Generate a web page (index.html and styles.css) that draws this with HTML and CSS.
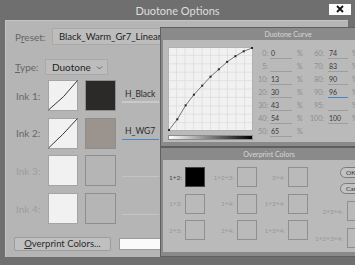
FILE: index.html
```html
<!DOCTYPE html>
<html>
<head>
  <meta charset="utf-8">
  <title>Duotone Options</title>
  <link rel="stylesheet" href="styles.css">
</head>
<body>
<div class="dialog">

  <div class="titlebar">
    <span class="title">Duotone Options</span>
    <div class="close">
      <svg width="8" height="8" viewBox="0 0 8 8"><path d="M1 1L7 7M7 1L1 7" stroke="#111" stroke-width="1.8"/></svg>
    </div>
  </div>

  <div class="panel">
    <div class="field-row">
      <span class="label preset-label">P<u>r</u>eset:</span>
      <div class="select preset-select">Black_Warm_Gr7_Linear</div>
    </div>
    <div class="field-row type-row">
      <span class="label type-label"><u>T</u>ype:</span>
      <div class="select type-select">
        <span>Duotone</span>
        <svg width="7" height="5" viewBox="0 0 7 5"><path d="M1 1.5L3.5 4L6 1.5" fill="none" stroke="#666" stroke-width="1"/></svg>
      </div>
    </div>

    <div class="inks">
      <div class="ink">
        <span class="ink-label">Ink 1:</span>
        <div class="curve-box">
          <svg width="30" height="31" viewBox="0 0 30 31"><path d="M0.5 30 Q 16 18 29.5 0.5" fill="none" stroke="#222" stroke-width="0.9"/></svg>
        </div>
        <div class="swatch swatch-black"></div>
        <div class="ink-name">H_Black</div>
      </div>
      <div class="ink">
        <span class="ink-label">Ink 2:</span>
        <div class="curve-box">
          <svg width="30" height="31" viewBox="0 0 30 31"><path d="M0.5 30 Q 14 18 29.5 0.5" fill="none" stroke="#222" stroke-width="0.9"/></svg>
        </div>
        <div class="swatch swatch-warm"></div>
        <div class="ink-name active">H_WG7</div>
      </div>
      <div class="ink off">
        <span class="ink-label">Ink 3:</span>
        <div class="curve-box"></div>
        <div class="swatch"></div>
        <div class="ink-name"></div>
      </div>
      <div class="ink off">
        <span class="ink-label">Ink 4:</span>
        <div class="curve-box"></div>
        <div class="swatch"></div>
        <div class="ink-name"></div>
      </div>
    </div>

    <div class="bottom-row">
      <div class="btn"><u>O</u>verprint Colors...</div>
      <div class="text-input"></div>
    </div>
  </div>

  <!-- floating sub panels over the dialog -->
  <div class="subpanel curve-panel">
    <div class="subpanel-head">Duotone Curve</div>
    <div class="subpanel-body curve-body">
      <div class="graph-col">
        <svg class="graph" width="85" height="84" viewBox="0 0 85 84">
          <rect x="0" y="0" width="85" height="84" fill="#f1f1f1"/>
          <g stroke="#dddddd" stroke-width="0.8">
            <path d="M8.5 0V84M17 0V84M25.5 0V84M34 0V84M42.5 0V84M51 0V84M59.5 0V84M68 0V84M76.5 0V84"/>
            <path d="M0 8.4H85M0 16.8H85M0 25.2H85M0 33.6H85M0 42H85M0 50.4H85M0 58.8H85M0 67.2H85M0 75.6H85"/>
          </g>
          <rect x="0.5" y="0.5" width="84" height="83" fill="none" stroke="#b2b2b2"/>
          <polyline points="1,83 9.3,72.3 17.6,58.4 25.9,47.7 34.2,38.7 42.5,29.7 50.8,22.3 59.1,14.9 67.4,9.2 75.7,4.3 84,1" fill="none" stroke="#555" stroke-width="0.8"/>
          <g fill="#2a2a2a">
            <rect x="0" y="82" width="2" height="2"/>
            <rect x="8.3" y="71.3" width="2" height="2"/>
            <rect x="16.6" y="57.4" width="2" height="2"/>
            <rect x="24.9" y="46.7" width="2" height="2"/>
            <rect x="33.2" y="37.7" width="2" height="2"/>
            <rect x="41.5" y="28.7" width="2" height="2"/>
            <rect x="49.8" y="21.3" width="2" height="2"/>
            <rect x="58.1" y="13.9" width="2" height="2"/>
            <rect x="66.4" y="8.2" width="2" height="2"/>
            <rect x="74.7" y="3.3" width="2" height="2"/>
            <rect x="83" y="0" width="2" height="2"/>
          </g>
        </svg>
        <div class="ramp"></div>
      </div>

      <div class="values">
        <div class="vrow">
          <span class="vlabel">0:</span><span class="vfield">0</span><span class="pct">%</span>
          <span class="vlabel second">60:</span><span class="vfield short">74</span><span class="pct narrow">%</span>
        </div>
        <div class="vrow">
          <span class="vlabel">5:</span><span class="vfield"></span><span class="pct">%</span>
          <span class="vlabel second">70:</span><span class="vfield short">83</span><span class="pct narrow">%</span>
        </div>
        <div class="vrow">
          <span class="vlabel">10:</span><span class="vfield">13</span><span class="pct">%</span>
          <span class="vlabel second">80:</span><span class="vfield short">90</span><span class="pct narrow">%</span>
        </div>
        <div class="vrow">
          <span class="vlabel">20:</span><span class="vfield">30</span><span class="pct">%</span>
          <span class="vlabel second">90:</span><span class="vfield short focus">96</span><span class="pct narrow">%</span>
        </div>
        <div class="vrow">
          <span class="vlabel">30:</span><span class="vfield">43</span><span class="pct">%</span>
          <span class="vlabel second">95:</span><span class="vfield short"></span><span class="pct narrow">%</span>
        </div>
        <div class="vrow">
          <span class="vlabel">40:</span><span class="vfield">54</span><span class="pct">%</span>
          <span class="vlabel second">100:</span><span class="vfield short">100</span><span class="pct narrow">%</span>
        </div>
        <div class="vrow">
          <span class="vlabel">50:</span><span class="vfield">65</span><span class="pct">%</span>
        </div>
      </div>
    </div>
  </div>

  <div class="subpanel overprint-panel">
    <div class="subpanel-head">Overprint Colors</div>
    <div class="subpanel-body op-body">
      <div class="op-grid">
        <span class="op-label on">1+2:</span><div class="op-sq filled"></div>
        <span class="op-label">1+2+3:</span><div class="op-sq"></div>
        <span class="op-label">3+4:</span><div class="op-sq"></div>

        <span class="op-label">1+3:</span><div class="op-sq"></div>
        <span class="op-label">1+4:</span><div class="op-sq"></div>
        <span class="op-label">1+2+4:</span><div class="op-sq"></div>

        <span class="op-label">2+3:</span><div class="op-sq"></div>
        <span class="op-label">2+4:</span><div class="op-sq"></div>
        <span class="op-label">1+3+4:</span><div class="op-sq"></div>
      </div>
      <div class="op-side">
        <div class="pill">OK</div>
        <div class="pill">Cancel</div>
        <div class="op-item"><span class="op-label">2+3+4:</span><div class="op-sq"></div></div>
        <div class="op-item"><span class="op-label">1+2+3+4:</span><div class="op-sq"></div></div>
      </div>
    </div>
  </div>

</div>
</body>
</html>
```

FILE: styles.css
```css
*, *::before, *::after {
  box-sizing: border-box;
  margin: 0;
  padding: 0;
}

body {
  width: 355px;
  height: 265px;
  overflow: hidden;
  background: #6f6f6f;
  font-family: "Lato", "Liberation Sans", sans-serif;
}

.dialog {
  position: relative;
  width: 355px;
  height: 265px;
  overflow: hidden;
  background: #6f6f6f;
}

/* title bar */
.titlebar {
  height: 20px;
  display: grid;
  grid-template-columns: 1fr auto 1fr;
  align-items: center;
}
.title {
  grid-column: 2;
  color: #dedede;
  font-size: 11px;
}
.close {
  grid-column: 3;
  justify-self: end;
  margin-right: 4px;
  margin-top: -2px;
  width: 22px;
  height: 11px;
  background: #fbfbfb;
  display: flex;
  justify-content: center;
  align-items: center;
}

/* main panel */
.panel {
  margin-left: 5px;
  width: 343px;
  height: 237px;
  background: #b5b5b5;
  border-top: 1px solid #c3c3c3;
  border-left: 1px solid #c3c3c3;
  padding: 7px 0 0 9px;
}

.field-row {
  display: flex;
  align-items: center;
  height: 17px;
}
.type-row {
  margin-top: 14px;
  height: 16px;
}
.label {
  color: #656565;
  font-size: 10px;
}
.preset-label { width: 37px; }
.type-label { width: 30px; }

.select {
  height: 100%;
  background: #bdbdbd;
  border: 1px solid #a9a9a9;
  color: #1f1f1f;
  font-size: 10px;
  display: flex;
  align-items: center;
  padding-left: 6px;
}
.preset-select {
  width: 150px;
  font-size: 9.5px;
}
.type-select {
  width: 63px;
  justify-content: space-between;
  padding-right: 4px;
}

/* ink rows */
.inks {
  margin-top: 5px;
  display: flex;
  flex-direction: column;
  gap: 6.7px;
}
.ink {
  display: flex;
  align-items: center;
  height: 31px;
}
.ink-label {
  width: 33px;
  padding-left: 1px;
  color: #686868;
  font-size: 10px;
}
.ink.off .ink-label { color: #9d9d9d; }

.curve-box {
  width: 30px;
  height: 31px;
  background: #f1f1f1;
  border: 1px solid #a4a4a4;
}
.curve-box svg { display: block; margin: -1px; }

.swatch {
  width: 31px;
  height: 31px;
  margin-left: 7px;
  border: 1px solid #8e8e8e;
  background: #b5b5b5;
}
.swatch-black { background: #2b2a28; }
.swatch-warm { background: #9b938e; }

.ink-name {
  margin-left: 6px;
  width: 37px;
  height: 14px;
  color: #2a2a2a;
  font-size: 8.5px;
  padding-left: 3px;
  white-space: nowrap;
  border-bottom: 2px solid #cacaca;
}
.ink-name.active { border-bottom: 1px solid #4b87c7; }
.ink.off .ink-name { border-bottom: 1px solid #c4c4c4; height: 12px; }

/* bottom row */
.bottom-row {
  margin-top: 13px;
  display: flex;
  align-items: center;
}
.btn {
  margin-left: -1px;
  width: 97px;
  height: 14px;
  background: #c0c0c0;
  border: 1px solid #9c9c9c;
  border-radius: 2px;
  color: #2c2c2c;
  font-size: 9.5px;
  text-align: center;
  line-height: 12px;
}
.text-input {
  margin-left: 8px;
  width: 60px;
  height: 12px;
  background: #fafafa;
  border: 1px solid #9a9a9a;
}

/* floating sub panels */
.subpanel {
  position: absolute;
  left: 160px;
  background: #8a8a8a;
  border: 1px solid #5f5f5f;
  padding: 0 0 4px 2px;
}
.subpanel-head {
  height: 12px;
  line-height: 12px;
  text-align: center;
  color: #d8d8d8;
  font-size: 7px;
}
.subpanel-body {
  background: #bababa;
}

.curve-panel {
  top: 27px;
  width: 254px;
}
.curve-body {
  display: flex;
  padding: 7px 0 2px 5px;
}
.graph { display: block; }
.ramp {
  margin-top: 4px;
  width: 85px;
  height: 5px;
  border: 1px solid #8c8c8c;
  background: linear-gradient(to right, #ffffff, #000000);
}

.values {
  margin-left: 2px;
  margin-top: 1px;
  font-size: 7px;
}
.vrow {
  display: flex;
  height: 13px;
}
.vlabel {
  width: 13px;
  text-align: right;
  color: #8d8d8d;
  line-height: 11px;
}
.vlabel.second {
  margin-left: 5px;
  width: 14px;
}
.vfield {
  margin-left: 2px;
  width: 22px;
  height: 11px;
  line-height: 10px;
  padding-left: 1px;
  color: #383838;
  border-bottom: 1px solid #9e9e9e;
}
.vfield.short {
  margin-left: 4px;
  width: 20px;
}
.vfield.focus { border-bottom-color: #4b87c7; }
.pct {
  margin-left: 5px;
  width: 8px;
  color: #8d8d8d;
  line-height: 11px;
}
.pct.narrow { margin-left: 4px; }

.overprint-panel {
  top: 147px;
  width: 216px;
}
.op-body {
  height: 92px;
  display: flex;
  align-items: flex-start;
  padding-top: 7px;
}
.op-grid {
  display: grid;
  grid-template-columns: 22px 20px 32px 20px 31px 20px;
  grid-auto-rows: 20px;
  row-gap: 6.5px;
  align-items: center;
}
.op-label {
  font-size: 6.5px;
  color: #989898;
  text-align: right;
  padding-right: 3px;
}
.op-label.on { color: #4a4a4a; }
.op-sq {
  width: 20px;
  height: 20px;
  border: 1px solid #8f8f8f;
}
.op-sq.filled { background: #000; border-color: #444; }

.op-side {
  display: flex;
  flex-direction: column;
}
.pill {
  margin-left: 32px;
  width: 34px;
  height: 11px;
  border: 1px solid #7a7a7a;
  border-radius: 6px;
  background: #c2c2c2;
  color: #333;
  font-size: 6.5px;
  line-height: 9px;
  padding-left: 5px;
}
.pill + .pill { margin-top: 5px; }
.op-item {
  margin-top: 7px;
  display: flex;
  align-items: center;
}
.op-item .op-label {
  width: 39px;
  padding-right: 4px;
}
```
